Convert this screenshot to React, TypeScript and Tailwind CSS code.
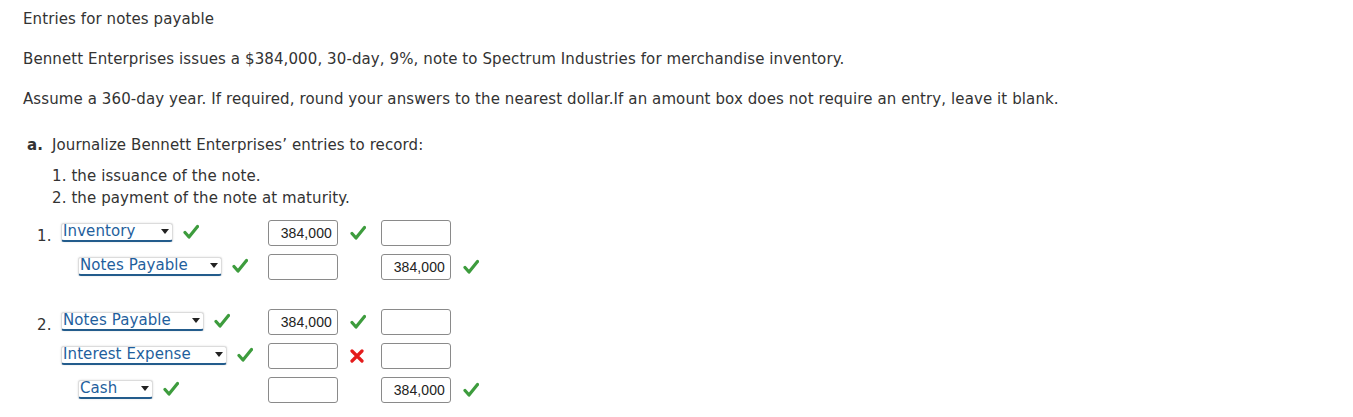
import React from "react";

function Check() {
  return (
    <svg width="16" height="16" viewBox="0 0 16 16" className="block">
      <path d="M2 8.5 L6 13 L14.5 2.5" fill="none" stroke="#3d9c3d" strokeWidth="3.2" strokeLinecap="round" strokeLinejoin="round" />
    </svg>
  );
}

function Cross() {
  return (
    <svg width="14" height="14" viewBox="0 0 14 14" className="block">
      <path d="M2 2 L12 12 M12 2 L2 12" fill="none" stroke="#e41c1c" strokeWidth="3.2" strokeLinecap="round" />
    </svg>
  );
}

function Sel({ label, w }: { label: string; w: number }) {
  return (
    <div
      className="relative h-[19px] bg-white rounded-[3px] border border-[#dcdcdc] border-b-2 border-b-[#235c8c] flex items-center justify-between pl-[1px] pr-[3px] shadow-[0_0_2px_rgba(0,0,0,0.15)]"
      style={{ width: w }}
    >
      <span className="text-[#1f5f9d] text-[15px] leading-[17px] tracking-[0.1px]">{label}</span>
      <svg width="8" height="5" viewBox="0 0 8 5" className="block">
        <path d="M0 0 L8 0 L4 5 Z" fill="#222" />
      </svg>
    </div>
  );
}

function Box({ value }: { value?: string }) {
  return (
    <div className="w-[70px] h-[26px] border border-[#8a8a8a] rounded-[3px] bg-white flex items-center justify-end pr-[5px] font-['Liberation_Sans',Arial,sans-serif] text-[14px] text-[#222]">
      {value ?? ""}
    </div>
  );
}

type Mark = "check" | "cross" | null;

function Row({
  num,
  label,
  w,
  indent,
  debit,
  debitMark,
  credit,
  creditMark,
}: {
  num?: string;
  label: string;
  w: number;
  indent?: boolean;
  debit?: string;
  debitMark: Mark;
  credit?: string;
  creditMark: Mark;
}) {
  return (
    <div className="flex items-center h-[26px]">
      <div className="w-[24px] pt-[5px] text-[15px]">{num ?? ""}</div>
      <div className={`w-[207px] flex items-center ${indent ? "pl-[17px]" : ""}`}>
        <div className="-mt-[2px]">
          <Sel label={label} w={w} />
        </div>
        <div className="ml-[10px] -mt-[2px]">
          <Check />
        </div>
      </div>
      <Box value={debit} />
      <div className="w-[43px] pl-[12px]">
        {debitMark === "check" ? <Check /> : debitMark === "cross" ? <Cross /> : null}
      </div>
      <Box value={credit} />
      <div className="pl-[12px]">
        {creditMark === "check" ? <Check /> : creditMark === "cross" ? <Cross /> : null}
      </div>
    </div>
  );
}

export default function App() {
  return (
    <div className="pl-[23px] pt-[8px] font-['Verdana','DejaVu_Sans',sans-serif] text-[15px] leading-[22px] tracking-[0.1px] text-[#333] bg-white min-h-[417px]">
      <p>Entries for notes payable</p>
      <p className="mt-[18px]">
        Bennett Enterprises issues a $384,000, 30-day, 9%, note to Spectrum Industries for merchandise inventory.
      </p>
      <p className="mt-[18px]">
        Assume a 360-day year. If required, round your answers to the nearest dollar.If an amount box does not require an entry, leave it blank.
      </p>
      <p className="mt-[24px] pl-[4px]">
        <span className="font-bold">a.</span>
        <span className="ml-[9px]">Journalize Bennett Enterprises’ entries to record:</span>
      </p>
      <div className="mt-[9px] pl-[29px]">
        <p>1. the issuance of the note.</p>
        <p>2. the payment of the note at maturity.</p>
      </div>
      <div className="mt-[11px] pl-[14px] flex flex-col gap-[8px]">
        <Row num="1." label="Inventory" w={112} debit="384,000" debitMark="check" creditMark={null} />
        <Row label="Notes Payable" w={144} indent credit="384,000" debitMark={null} creditMark="check" />
        <div className="h-[13px]" />
        <Row num="2." label="Notes Payable" w={143} debit="384,000" debitMark="check" creditMark={null} />
        <Row label="Interest Expense" w={166} debitMark="cross" creditMark={null} />
        <Row label="Cash" w={75} indent credit="384,000" debitMark={null} creditMark="check" />
      </div>
    </div>
  );
}
